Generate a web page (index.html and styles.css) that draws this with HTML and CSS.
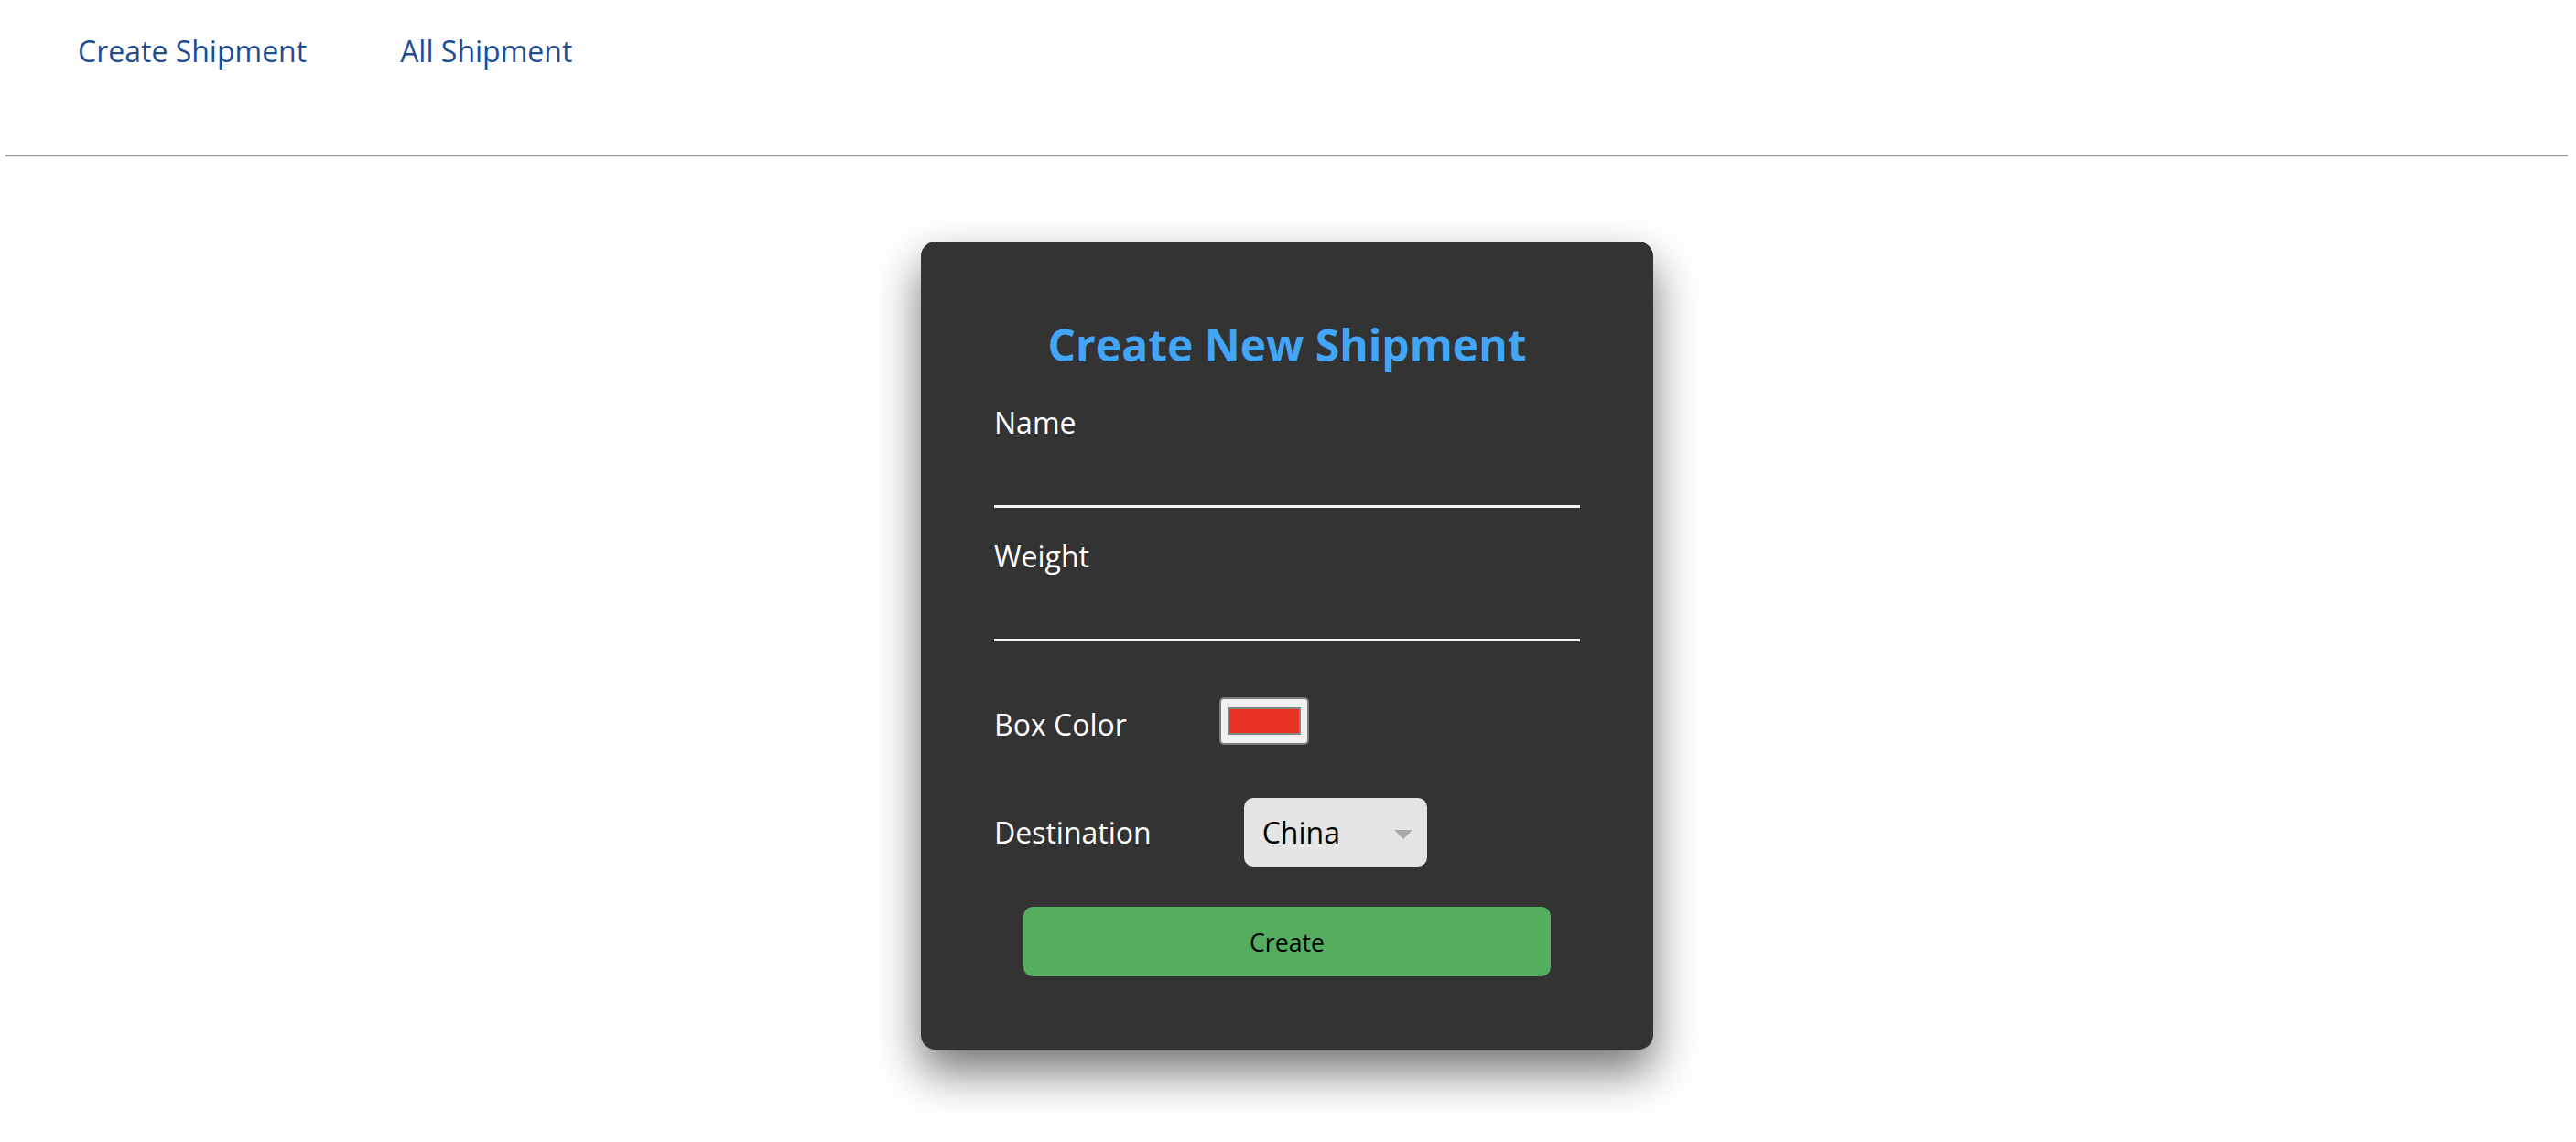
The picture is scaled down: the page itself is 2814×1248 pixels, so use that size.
FILE: index.html
```html
<!DOCTYPE html>
<html lang="en">
<head>
<meta charset="utf-8">
<title>Create Shipment</title>
<link rel="stylesheet" href="styles.css">
</head>
<body>
<nav class="topnav">
  <a class="nav-link" href="#">Create Shipment</a>
  <a class="nav-link" href="#">All Shipment</a>
</nav>
<hr class="divider">
<main class="page">
  <form class="card">
    <h2 class="card-title">Create New Shipment</h2>
    <div class="field">
      <label class="field-label" for="name">Name</label>
      <input class="line-input" id="name" type="text">
    </div>
    <div class="field">
      <label class="field-label" for="weight">Weight</label>
      <input class="line-input" id="weight" type="text">
    </div>
    <div class="row row-color">
      <label class="row-label">Box Color</label>
      <span class="swatch"><span class="swatch-fill"></span></span>
    </div>
    <div class="row row-dest">
      <label class="row-label" for="dest">Destination</label>
      <div class="select-wrap">
        <select class="select" id="dest">
          <option>China</option>
        </select>
      </div>
    </div>
    <button class="create-btn" type="button">Create</button>
  </form>
</main>
</body>
</html>
```
FILE: styles.css
```css
html, body {
  margin: 0;
  padding: 0;
  background: #ffffff;
}

body {
  font-family: "Open Sans", "Noto Sans", sans-serif;
}

.topnav {
  display: flex;
  gap: 102px;
  padding: 34px 0 0 85px;
  line-height: 44px;
  font-size: 32px;
}

.nav-link {
  color: #1e4d92;
  text-decoration: none;
}

.divider {
  height: 0;
  margin: 91px 9px 0 6px;
  border: 0;
  border-top: 2px solid #9a9a9a;
  border-bottom: 1px solid #ececec;
}

.page {
  display: flex;
  justify-content: center;
  padding: 92px 2px 101px 0;
}

.card {
  width: 640px;
  padding: 80px;
  background: #333333;
  border-radius: 16px;
  box-shadow: 0 24px 50px rgba(0, 0, 0, 0.55);
  display: flex;
  flex-direction: column;
}

.card-title {
  margin: 0;
  text-align: center;
  font-size: 48px;
  line-height: 66px;
  font-weight: 700;
  color: #42a5f5;
}

.field {
  display: flex;
  flex-direction: column;
  margin-top: 30px;
}

.field + .field {
  margin-top: 31px;
}

.field-label,
.row-label {
  font-size: 32px;
  line-height: 44px;
  color: #ffffff;
}

.line-input {
  box-sizing: border-box;
  width: 100%;
  height: 71px;
  margin: 0;
  padding: 0;
  border: 0;
  border-bottom: 3px solid #f4f4f4;
  background: transparent;
  color: #ffffff;
  font-family: inherit;
  font-size: 32px;
  outline: none;
}

.row {
  display: flex;
  gap: 101px;
}

.row-color {
  align-items: flex-end;
  margin-top: 61px;
}

.row-dest {
  align-items: center;
  margin-top: 58px;
}

.swatch {
  box-sizing: border-box;
  display: flex;
  width: 98px;
  height: 52px;
  padding: 9px 7px;
  background: #f0f0f0;
  border: 2px solid #7b7b7b;
  border-radius: 5px;
}

.swatch-fill {
  flex: 1;
  background: #e93323;
  border: 2px solid #858585;
}

.select-wrap {
  position: relative;
  display: flex;
}

.select {
  box-sizing: border-box;
  -webkit-appearance: none;
  appearance: none;
  width: 200px;
  height: 75px;
  margin: 0;
  padding: 0 0 0 20px;
  border: 0;
  border-radius: 10px;
  background: #e5e5e5;
  color: #000000;
  font-family: inherit;
  font-size: 32px;
  outline: none;
}

.select-wrap::after {
  content: "";
  position: absolute;
  right: 16px;
  top: 35px;
  width: 0;
  height: 0;
  border-left: 10px solid transparent;
  border-right: 10px solid transparent;
  border-top: 10px solid #a9a9a9;
  pointer-events: none;
}

.create-btn {
  width: 90%;
  height: 76px;
  margin: 44px auto 0;
  border: 0;
  border-radius: 10px;
  background: #55ad5f;
  color: #000000;
  font-family: inherit;
  font-size: 26.67px;
}
```
